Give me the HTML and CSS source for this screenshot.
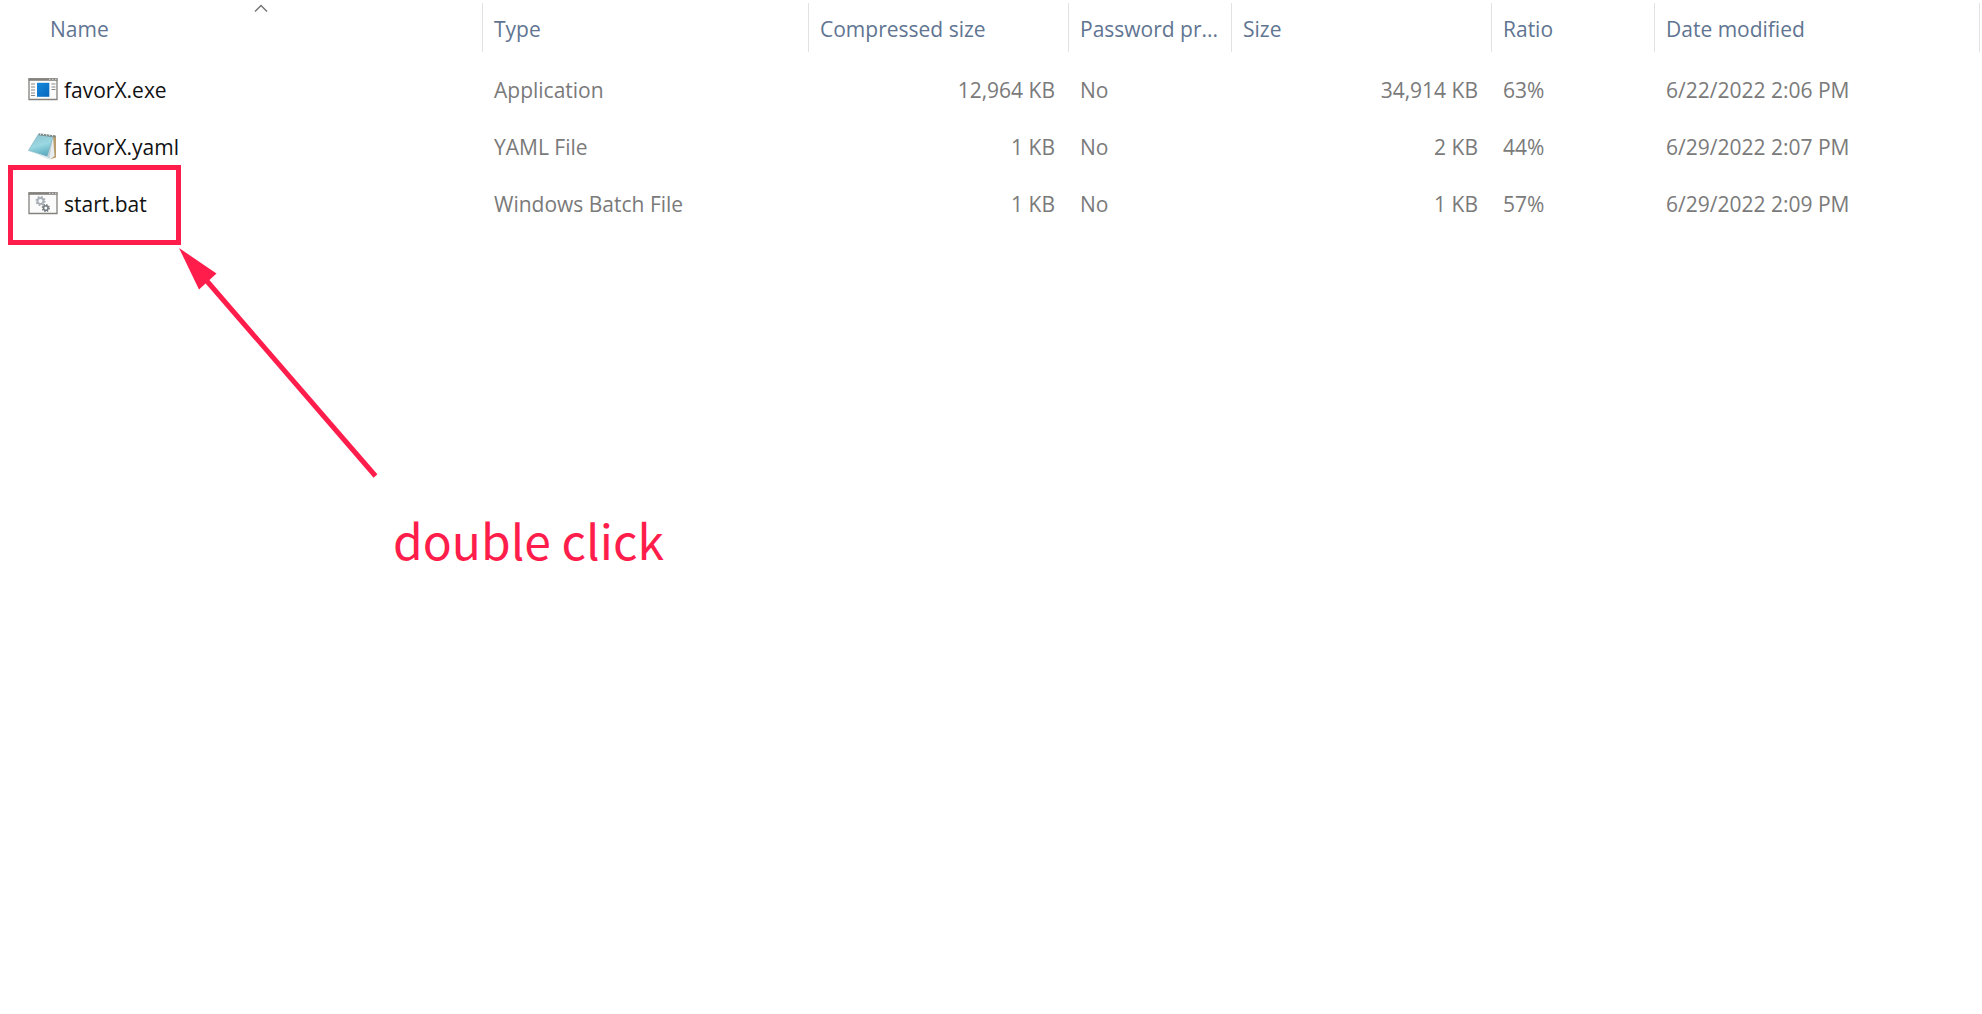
FILE: index.html
```html
<!DOCTYPE html>
<html lang="en">
<head>
<meta charset="utf-8">
<meta name="viewport" content="width=device-width, initial-scale=1">
<title>favorX</title>
<link rel="stylesheet" href="styles.css">
</head>
<body>
<main class="explorer">
  <table class="files">
    <colgroup>
      <col class="col-name"><col class="col-type"><col class="col-packed"><col class="col-password"><col class="col-size"><col class="col-ratio"><col class="col-date">
    </colgroup>
    <thead>
      <tr>
        <th scope="col" class="name-head" aria-sort="ascending">Name
          <svg class="sort" viewBox="0 0 14 8" aria-hidden="true"><path d="M1 7.500 7 1.500l6 6" fill="none" stroke="#777" stroke-width="1.500"/></svg>
        </th>
        <th scope="col">Type</th>
        <th scope="col">Compressed size</th>
        <th scope="col">Password pr...</th>
        <th scope="col">Size</th>
        <th scope="col">Ratio</th>
        <th scope="col">Date modified</th>
      </tr>
    </thead>
    <tbody>
      <tr>
        <td><span class="file">
          <svg class="icon" viewBox="0 1 30 28" aria-hidden="true">
            <path d="M1 4h28v20.500H1z" fill="#fbfbfb" stroke="#85827e" stroke-width="1.300"/>
            <path d="M.500 3.300h29v2.500H.500z" fill="#85827e"/>
            <path d="M21 4.300h1.500M24 4.300h1.500M27 4.300h1.500" stroke="#e2e0de"/>
            <path d="M3 9h4M3 12h4M3 15h4M3 18h4M3 20.500h4M23.500 9h4M23.500 12h4M23.500 14.500h4" stroke="#888" stroke-width="1.100"/>
            <path d="M9 7.800h12.300v14H9z" fill="url(#blue)"/>
            <defs><linearGradient id="blue" x1="0" y1="0" x2="1" y2="1"><stop stop-color="#1688dc"/><stop offset="1" stop-color="#0768bd"/></linearGradient></defs>
          </svg>favorX.exe</span></td>
        <td>Application</td>
        <td class="number">12,964 KB</td>
        <td>No</td>
        <td class="number">34,914 KB</td>
        <td>63%</td>
        <td>6/22/2022 2:06 PM</td>
      </tr>
      <tr>
        <td><span class="file">
          <svg class="icon" viewBox="0 1 30 28" aria-hidden="true">
            <defs><linearGradient id="note" x1=".3" y1="0" x2=".6" y2="1"><stop stop-color="#8fc3ce"/><stop offset=".5" stop-color="#9ad8e2"/><stop offset="1" stop-color="#55a8bc"/></linearGradient></defs>
            <path d="M25 3 28 4 28 25.500 22 27.300z" fill="#b99c6b"/>
            <path d="M25 4 26.500 24 22 27.500 17 25.500z" fill="#e8edef"/>
            <path d="M25 5 21.500 26.500 17 25z" fill="#c3d3da"/>
            <path d="M10.500 2 25 4.500 19 24.500.500 18.500z" fill="url(#note)" stroke="#78adb9" stroke-width=".6"/>
            <path d="M.500 18.500 19 24.500 22 27.500 17.500 26z" fill="#dce9ec"/>
            <path d="M11 2.200 27.500 4.400" stroke="#7d8a88" stroke-width="2"/>
            <path d="M12 2h1M15 2.400h1M18 2.800h1M21 3.200h1M24 3.600h1" stroke="#e5eceb" stroke-width="1.300"/>
          </svg>favorX.yaml</span></td>
        <td>YAML File</td>
        <td class="number">1 KB</td>
        <td>No</td>
        <td class="number">2 KB</td>
        <td>44%</td>
        <td>6/29/2022 2:07 PM</td>
      </tr>
      <tr>
        <td><span class="file">
          <svg class="icon" viewBox="0 1 30 28" aria-hidden="true">
            <path d="M1 4h28v20.500H1z" fill="#fbfbfb" stroke="#85827e" stroke-width="1.300"/>
            <path d="M.500 3.300h29v2.500H.500z" fill="#85827e"/>
            <path d="M21 4.300h1.500M24 4.300h1.500M27 4.300h1.500" stroke="#e2e0de"/>
            <circle cx="12.500" cy="12" r="3" fill="none" stroke="#a9b0b7" stroke-width="2"/>
            <circle cx="12.500" cy="12" r="4.300" fill="none" stroke="#a9b0b7" stroke-width="1.600" stroke-dasharray="1.700 1.680"/>
            <circle cx="17.800" cy="19" r="2.300" fill="none" stroke="#747b80" stroke-width="1.600"/>
            <circle cx="17.800" cy="19" r="3.400" fill="none" stroke="#747b80" stroke-width="1.400" stroke-dasharray="1.400 1.270"/>
          </svg>start.bat</span></td>
        <td>Windows Batch File</td>
        <td class="number">1 KB</td>
        <td>No</td>
        <td class="number">1 KB</td>
        <td>57%</td>
        <td>6/29/2022 2:09 PM</td>
      </tr>
    </tbody>
  </table>
  <div class="highlight"></div>
  <svg class="arrow" viewBox="0 0 200 232" aria-hidden="true">
    <path d="M1 0 38.500 25.500 21 41.500z" fill="#ff1d4b"/>
    <path d="M28 32 197.500 228" stroke="#ff1d4b" stroke-width="5"/>
  </svg>
  <p class="callout">double click</p>
</main>
</body>
</html>
```
FILE: styles.css
```css
* {
  box-sizing: border-box;
}

body {
  margin: 0;
  background: #fff;
  color: #7a7a7a;
  font: 21px/28px "Open Sans", "Noto Sans", sans-serif;
}

.explorer {
  position: relative;
  min-height: 100vh;
  padding: 3px 2px 0 0;
}

.files {
  width: 100%;
  table-layout: fixed;
  border-collapse: separate;
  border-spacing: 0;
}

.col-name { width: 483px; }
.col-type { width: 326px; }
.col-packed { width: 260px; }
.col-password { width: 163px; }
.col-size { width: 260px; }
.col-ratio { width: 163px; }

.files th,
.files td {
  padding: 0 8px 0 11px;
  text-align: left;
  font-weight: 400;
  white-space: nowrap;
}

.files th {
  height: 49px;
  padding-top: 3px;
  border-right: 1px solid #e2e2e2;
  color: #5f7592;
}

.files .name-head {
  position: relative;
  padding-left: 50px;
}

.sort {
  position: absolute;
  top: 1px;
  left: 254px;
  width: 14px;
  height: 8px;
}

.files tbody::before {
  content: "";
  display: block;
  height: 9px;
}

.files td {
  height: 57px;
}

.files td:first-child {
  padding-left: 28px;
  color: #111;
}

.files .number {
  padding-right: 14px;
  text-align: right;
}

.file {
  display: flex;
  align-items: center;
  gap: 6px;
}

.icon {
  width: 30px;
  height: 28px;
}

.highlight {
  position: absolute;
  top: 165px;
  left: 8px;
  width: 173px;
  height: 80px;
  border: 5px solid #ff1d4b;
}

.arrow {
  position: absolute;
  top: 248px;
  left: 178px;
  width: 200px;
  height: 232px;
}

.callout {
  position: absolute;
  top: 501px;
  left: 393px;
  margin: 0;
  color: #ff1d4b;
  font: 48px/76px "Noto Sans CJK SC", sans-serif;
  white-space: nowrap;
}
```
